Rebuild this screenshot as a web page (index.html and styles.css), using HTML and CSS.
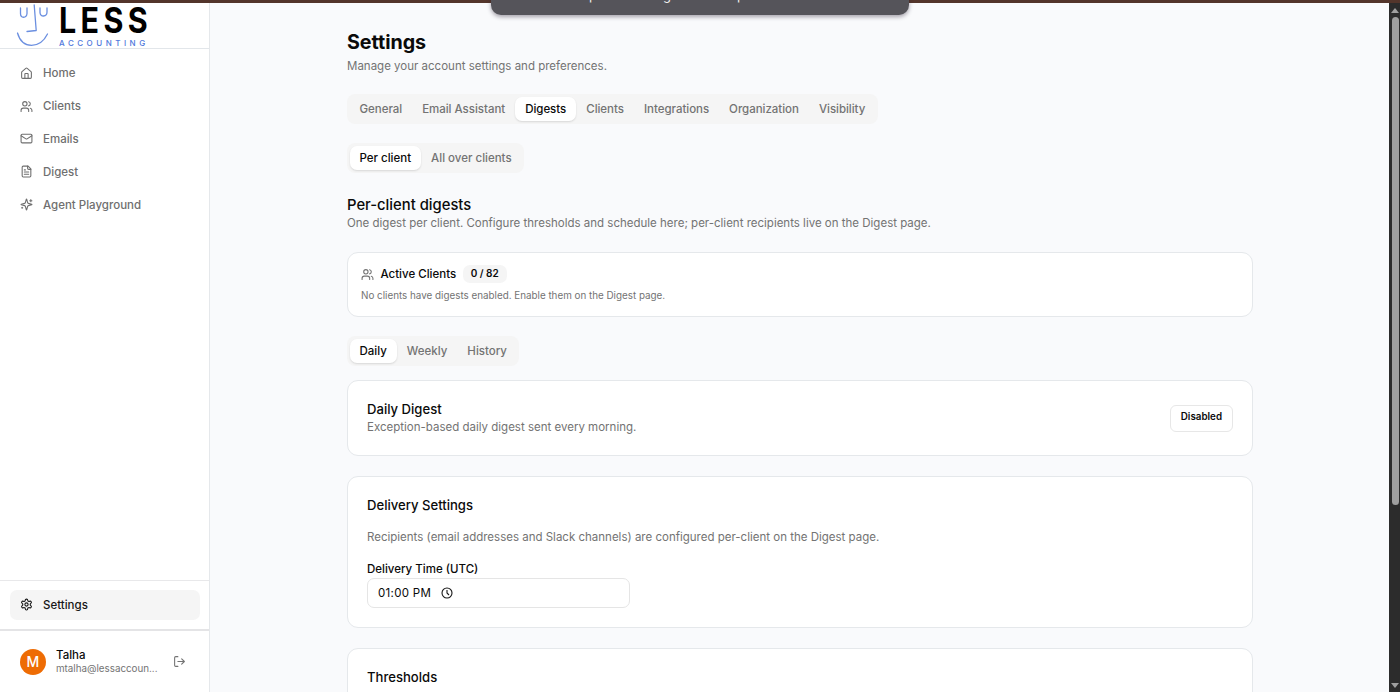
FILE: index.html
```
<!DOCTYPE html>
<html lang="en">
<head>
    <meta charset="UTF-8">
    <title>Settings - Less Accounting</title>
    <link rel="stylesheet" href="styles.css">
</head>
<body>
    <!-- shared icons -->
    <svg class="sprite" xmlns="http://www.w3.org/2000/svg">
        <symbol id="i-users" viewBox="0 0 24 24"><path d="M16 21v-2a4 4 0 0 0-4-4H6a4 4 0 0 0-4 4v2"/><circle cx="9" cy="7" r="4"/><path d="M22 21v-2a4 4 0 0 0-3-3.870M16 3.130a4 4 0 0 1 0 7.750"/></symbol>
    </svg>

    <div class="top-strip"></div>
    <div class="toast"><span>p</span><span>g</span><span>p</span></div>

    <div class="app">
        <aside class="sidebar">
            <div class="logo">
                <svg class="face" viewBox="0 0 34 43" width="34" height="43">
                    <path d="M4.5 5v5.5c0 5 6 5 6.500 0V5M24 5v4.500c0 5 7 4.500 7-.5V5M18.200 2l2 25.500-9.200 1M1.500 30c2 7 6.500 12.300 14 12.300S28.500 37 31.500 31"/>
                </svg>
                <div class="wordmark">
                    <strong>LESS</strong>
                    <span>ACCOUNTING</span>
                </div>
            </div>

            <nav class="nav">
                <a class="nav-item"><svg class="icon" viewBox="0 0 24 24"><path d="M15 21v-8a1 1 0 0 0-1-1h-4a1 1 0 0 0-1 1v8"/><path d="M3 10a2 2 0 0 1 .709-1.528l7-6a2 2 0 0 1 2.582 0l7 6A2 2 0 0 1 21 10v9a2 2 0 0 1-2 2H5a2 2 0 0 1-2-2z"/></svg>Home</a>
                <a class="nav-item"><svg class="icon"><use href="#i-users"/></svg>Clients</a>
                <a class="nav-item"><svg class="icon" viewBox="0 0 24 24"><rect x="2" y="4" width="20" height="16" rx="2"/><path d="m22 7-8.970 5.700a1.940 1.940 0 0 1-2.060 0L2 7"/></svg>Emails</a>
                <a class="nav-item"><svg class="icon" viewBox="0 0 24 24"><path d="M15 2H6a2 2 0 0 0-2 2v16a2 2 0 0 0 2 2h12a2 2 0 0 0 2-2V7Z"/><path d="M14 2v4a2 2 0 0 0 2 2h4M10 9H8M16 13H8M16 17H8"/></svg>Digest</a>
                <a class="nav-item"><svg class="icon" viewBox="0 0 24 24"><path d="M9.937 15.500A2 2 0 0 0 8.500 14.063l-6.135-1.582a.5.5 0 0 1 0-.962L8.500 9.936A2 2 0 0 0 9.937 8.500l1.582-6.135a.5.5 0 0 1 .963 0L14.063 8.500A2 2 0 0 0 15.500 9.937l6.135 1.581a.5.5 0 0 1 0 .964L15.500 14.063a2 2 0 0 0-1.437 1.437l-1.582 6.135a.5.5 0 0 1-.963 0z"/><path d="M20 3v4M22 5h-4M4 17v2M5 18H3"/></svg>Agent Playground</a>
            </nav>

            <div class="nav nav-bottom">
                <a class="nav-item active"><svg class="icon" viewBox="0 0 24 24"><path d="M12.220 2h-.44a2 2 0 0 0-2 2v.18a2 2 0 0 1-1 1.730l-.43.25a2 2 0 0 1-2 0l-.15-.08a2 2 0 0 0-2.730.73l-.22.38a2 2 0 0 0 .73 2.730l.15.1a2 2 0 0 1 1 1.720v.51a2 2 0 0 1-1 1.740l-.15.09a2 2 0 0 0-.73 2.730l.22.38a2 2 0 0 0 2.730.73l.15-.08a2 2 0 0 1 2 0l.43.25a2 2 0 0 1 1 1.730V20a2 2 0 0 0 2 2h.44a2 2 0 0 0 2-2v-.18a2 2 0 0 1 1-1.730l.43-.25a2 2 0 0 1 2 0l.15.08a2 2 0 0 0 2.730-.73l.22-.39a2 2 0 0 0-.73-2.730l-.15-.08a2 2 0 0 1-1-1.740v-.5a2 2 0 0 1 1-1.740l.15-.09a2 2 0 0 0 .73-2.730l-.22-.38a2 2 0 0 0-2.730-.73l-.15.08a2 2 0 0 1-2 0l-.43-.25a2 2 0 0 1-1-1.730V4a2 2 0 0 0-2-2z"/><circle cx="12" cy="12" r="3"/></svg>Settings</a>
            </div>

            <div class="user">
                <div class="avatar">M</div>
                <div class="user-info">
                    <div class="user-name">Talha</div>
                    <div class="user-email">mtalha@lessaccoun...</div>
                </div>
                <svg class="icon" viewBox="0 0 24 24"><path d="M9 21H5a2 2 0 0 1-2-2V5a2 2 0 0 1 2-2h4M16 17l5-5-5-5M21 12H9"/></svg>
            </div>
        </aside>

        <main class="main">
            <div class="content">
                <h1>Settings</h1>
                <p class="muted">Manage your account settings and preferences.</p>

                <div class="tabs tabs-main">
                    <button>General</button>
                    <button>Email Assistant</button>
                    <button class="selected">Digests</button>
                    <button>Clients</button>
                    <button>Integrations</button>
                    <button>Organization</button>
                    <button>Visibility</button>
                </div>

                <div class="tabs tabs-scope">
                    <button class="selected">Per client</button>
                    <button>All over clients</button>
                </div>

                <h2>Per-client digests</h2>
                <p class="muted">One digest per client. Configure thresholds and schedule here; per-client recipients live on the Digest page.</p>

                <section class="card clients">
                    <div class="clients-head">
                        <svg class="icon"><use href="#i-users"/></svg>
                        <span>Active Clients</span>
                        <span class="badge">0 / 82</span>
                    </div>
                    <p class="small">No clients have digests enabled. Enable them on the Digest page.</p>
                </section>

                <div class="tabs tabs-period">
                    <button class="selected">Daily</button>
                    <button>Weekly</button>
                    <button>History</button>
                </div>

                <section class="card daily">
                    <div>
                        <h3>Daily Digest</h3>
                        <p class="muted">Exception-based daily digest sent every morning.</p>
                    </div>
                    <button class="toggle">Disabled</button>
                </section>

                <section class="card delivery">
                    <h3>Delivery Settings</h3>
                    <p class="muted">Recipients (email addresses and Slack channels) are configured per-client on the Digest page.</p>
                    <label>Delivery Time (UTC)</label>
                    <div class="time-input">
                        <span>01:00 PM</span>
                        <svg viewBox="0 0 24 24"><circle cx="12" cy="12" r="10"/><path d="M12 6v6l4 4"/></svg>
                    </div>
                </section>

                <section class="card thresholds">
                    <h3>Thresholds</h3>
                </section>
            </div>
        </main>

        <div class="scrollbar">
            <i class="arrow up"></i>
            <i class="thumb"></i>
            <i class="arrow down"></i>
        </div>
    </div>
</body>
</html>
```
FILE: styles.css
```
* {
    box-sizing: border-box;
}
body {
    margin: 0;
    height: 692px;
    overflow: hidden;
    font-family: Inter, "Liberation Sans", sans-serif;
    font-size: 11.5px;
    line-height: 16px;
    color: #0a0a0a;
    background: #f9fafc;
}
h1, h2, h3, p {
    margin: 0;
}
button {
    border: 0;
    background: none;
    font: inherit;
    color: inherit;
}
.sprite {
    display: none;
}
.icon {
    width: 13px;
    height: 13px;
    flex: none;
    fill: none;
    stroke: currentColor;
    stroke-width: 2;
    stroke-linecap: round;
    stroke-linejoin: round;
}
.top-strip {
    height: 3px;
    background: #53352b;
}
.toast {
    position: absolute;
    top: -20px;
    left: 491px;
    width: 418px;
    height: 35px;
    padding: 7px 0 0 98px;
    display: flex;
    gap: 66px;
    border-radius: 0 0 10px 10px;
    background: #55545a;
    box-shadow: 0 2px 4px rgba(40, 30, 50, .4);
    color: #eee;
    font-size: 13px;
    z-index: 5;
}
.app {
    display: flex;
    height: 689px;
}

/* sidebar */
.sidebar {
    width: 210px;
    flex: none;
    display: flex;
    flex-direction: column;
    background: #fff;
    border-right: 1px solid #e5e8eb;
}
.logo {
    height: 46px;
    flex: none;
    padding-left: 16px;
    display: flex;
    border-bottom: 1px solid #e2e6ea;
}
.face {
    fill: none;
    stroke: #6b8fe0;
    stroke-width: 1.3;
    stroke-linecap: round;
    stroke-linejoin: round;
}
.wordmark {
    width: 100px;
    padding: 2px 0 0 9px;
}
.wordmark strong {
    display: block;
    font-size: 35px;
    line-height: 30px;
    letter-spacing: 5px;
    color: #000;
    transform: scaleX(.87);
    transform-origin: left;
}
.wordmark span {
    display: block;
    margin-top: 3px;
    font-size: 8px;
    line-height: 10px;
    font-weight: 500;
    letter-spacing: 3.5px;
    color: #4f78dc;
}
.nav {
    display: flex;
    flex-direction: column;
    gap: 3px;
    padding: 9.500px 10px;
}
.nav-item {
    height: 29.800px;
    padding: 0 10px;
    display: flex;
    align-items: center;
    gap: 10px;
    border-radius: 7px;
    font-weight: 500;
    color: #6f6f6f;
}
.nav-item.active {
    background: #f5f5f5;
    color: #171717;
}
.nav-bottom {
    margin-top: auto;
    height: 51px;
    border-top: 1px solid #e8e8ea;
    border-bottom: 2px solid #e4e4e6;
    padding: 9px 9px 9px 10px;
}
.user {
    height: 61px;
    padding: 0 23px 0 20px;
    display: flex;
    align-items: center;
    color: #737373;
}
.avatar {
    width: 26px;
    height: 26px;
    border-radius: 50%;
    background: #ee6c04;
    color: #fff;
    font-size: 14px;
    font-weight: 500;
    line-height: 26px;
    text-align: center;
}
.user-info {
    margin-left: 10px;
    flex: 1;
}
.user-name {
    line-height: 14px;
    font-weight: 500;
    color: #0a0a0a;
}
.user-email {
    font-size: 9.800px;
    line-height: 14px;
}

/* page content */
.main {
    flex: 1;
    overflow: hidden;
}
.content {
    width: 906px;
    margin-left: 137px;
    padding-top: 25px;
}
h1 {
    font-size: 19.700px;
    line-height: 28px;
    font-weight: 700;
    letter-spacing: -.05px;
}
h2 {
    margin-top: 21px;
    font-size: 14.800px;
    line-height: 22px;
    font-weight: 500;
}
h3 {
    font-size: 13.100px;
    line-height: 20px;
    font-weight: 500;
}
.muted {
    margin-top: 2px;
    color: #737373;
}
h2 + .muted {
    margin-top: -1px;
}
.tabs {
    width: fit-content;
    height: 30px;
    padding: 2.500px;
    display: flex;
    border-radius: 8px;
    background: #f5f5f5;
}
.tabs button {
    height: 24px;
    padding: 0 10px;
    border-radius: 7px;
    font-weight: 500;
    line-height: 25px;
    color: #737373;
}
.tabs .selected {
    background: #fff;
    color: #0a0a0a;
    box-shadow: 0 1px 2px rgba(0, 0, 0, .12);
}
.tabs-main {
    margin-top: 20px;
}
.tabs-main button {
    letter-spacing: -.03px;
}
.tabs-scope {
    margin-top: 19px;
}
.tabs-period {
    margin: 19px 0 14px;
}
.card {
    border: 1px solid #e5e8eb;
    border-radius: 11px;
    background: #fff;
}
.clients {
    height: 65px;
    margin-top: 21px;
    padding: 12px 13px;
}
.clients-head {
    height: 18px;
    display: flex;
    align-items: center;
    gap: 6.500px;
    font-weight: 500;
}
.clients-head .icon {
    color: #737373;
}
.badge {
    height: 18px;
    padding: 0 8px;
    border-radius: 7px;
    background: #f5f5f5;
    font-size: 10px;
    font-weight: 600;
    line-height: 17px;
}
.small {
    margin-top: 4px;
    font-size: 9.830px;
    color: #737373;
}
.daily {
    height: 76px;
    padding: 0 19px;
    display: flex;
    align-items: center;
    justify-content: space-between;
}
.daily h3 {
    line-height: 19px;
}
.daily .muted {
    margin: 0 0 2px;
}
.toggle {
    height: 27px;
    padding: 0 10px 2px;
    border: 1px solid #e7e7e7;
    border-radius: 6px;
    font-size: 9.800px;
    font-weight: 600;
}
.delivery {
    height: 152px;
    margin-top: 20px;
    padding: 18px 19px;
}
.delivery .muted {
    margin-top: 14px;
}
label {
    display: block;
    margin-top: 16px;
    font-weight: 500;
}
.time-input {
    width: 263px;
    height: 30px;
    margin-top: 1px;
    padding: 0 10px;
    display: flex;
    align-items: center;
    gap: 10px;
    border: 1px solid #e5e5e5;
    border-radius: 7px;
    letter-spacing: .3px;
}
.time-input svg {
    width: 12px;
    height: 12px;
    fill: none;
    stroke: #171717;
    stroke-width: 2.200;
}
.thresholds {
    height: 100px;
    margin-top: 20px;
    padding: 18px 19px;
}

/* scrollbar */
.scrollbar {
    width: 11px;
    flex: none;
    display: flex;
    flex-direction: column;
    align-items: center;
    background: #2c2c2c;
}
.thumb {
    width: 7px;
    height: 488px;
    margin: 4px 0 0 1px;
    border-radius: 4px;
    background: #9f9f9f;
}
.arrow {
    border: 4px solid transparent;
}
.up {
    margin-top: 5px;
    margin-left: 1px;
    border-top: 0;
    border-bottom: 5px solid #9f9f9f;
}
.down {
    margin: auto 0 4px 1px;
    border-bottom: 0;
    border-top: 5px solid #9f9f9f;
}
```
